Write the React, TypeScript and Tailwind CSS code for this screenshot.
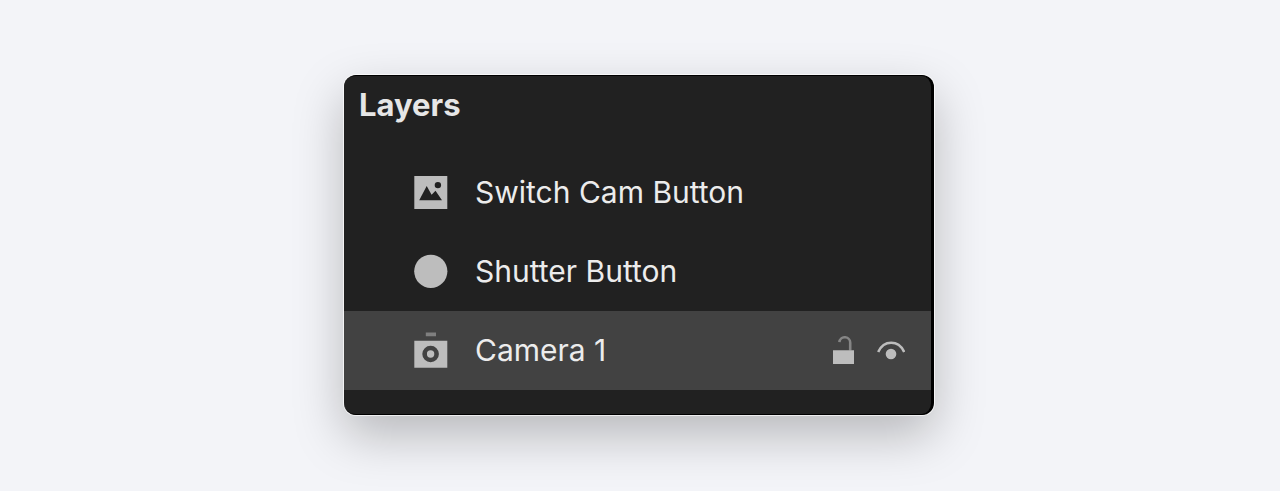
import React, { useState } from 'react';

interface Layer {
  id: string;
  name: string;
  icon: React.FC;
}

const ImageIcon: React.FC = () => (
  <svg width="34" height="34" viewBox="0 0 34 34" aria-hidden="true">
    <path d="M0.3 0.9h33v33h-33z" fill="#bdbdbd" />
    <path d="M5.2 25.3 12.7 10.9 17.6 19.7 21.5 15.7 28 25.3z" fill="#212121" />
    <circle cx="23.9" cy="10.1" r="3.2" fill="#212121" />
  </svg>
);

const CircleIcon: React.FC = () => (
  <svg width="34" height="34" viewBox="0 0 34 34" aria-hidden="true">
    <circle cx="16.8" cy="17.3" r="16.6" fill="#bdbdbd" />
  </svg>
);

const CameraIcon: React.FC = () => (
  <svg width="34" height="36" viewBox="0 0 34 36" aria-hidden="true">
    <path d="M11.8 0.6h10.2v3.6h-10.2z" fill="#7f7f7f" />
    <path d="M0.3 8.8h33v27h-33z" fill="#bdbdbd" />
    <circle cx="16.6" cy="22" r="6" fill="none" stroke="#424242" strokeWidth="4.6" />
  </svg>
);

const UnlockIcon: React.FC = () => (
  <svg width="22" height="28" viewBox="0 0 22 28" aria-hidden="true">
    <path d="M17.2 14.5V7.2a5.4 5.4 0 0 0-10.8-1" fill="none" stroke="#858585" strokeWidth="2.6" />
    <path d="M0 14.3h21v13.6h-21z" fill="#bdbdbd" />
  </svg>
);

const EyeIcon: React.FC = () => (
  <svg width="28" height="20" viewBox="0 0 28 20" aria-hidden="true">
    <path d="M1.2 12C3.8 6.4 8.4 2.8 14.2 2.8s10.4 3.6 13 9.2" fill="none" stroke="#bdbdbd" strokeWidth="2.6" />
    <circle cx="14" cy="14" r="5.3" fill="#bdbdbd" />
  </svg>
);

const layers: Layer[] = [
  { id: 'switch', name: 'Switch Cam Button', icon: ImageIcon },
  { id: 'shutter', name: 'Shutter Button', icon: CircleIcon },
  { id: 'camera', name: 'Camera 1', icon: CameraIcon },
];

const App: React.FC = () => {
  const [selected, setSelected] = useState('camera');

  return (
    <main className="flex min-h-screen items-center justify-center bg-[#f3f4f8] pr-0.5 pb-0.5 font-['Inter',sans-serif] [font-variant-ligatures:none]">
      <section className="w-full max-w-[590px] overflow-hidden rounded-xl border-y border-r-3 border-black bg-[#212121] pb-6 shadow-[0_0_0_1px_rgba(255,255,255,0.7),0_20px_50px_rgba(0,0,0,0.25)]">
        {/* Header */}
        <h1 className="px-[15px] pt-2 pb-7 text-[31px] leading-[41px] font-bold text-[#e6e6e6]">Layers</h1>

        {/* Layer rows */}
        <ul>
          {layers.map(({ id, name, icon: Icon }) => (
            <li
              key={id}
              className={`flex h-[79px] items-center pr-[26px] ${selected === id ? 'bg-[#424242]' : ''}`}
            >
              <button
                type="button"
                onClick={() => setSelected(id)}
                className="flex flex-1 items-center gap-[27px] pl-[70px] text-left text-[30px] leading-10 text-[#ececec]"
              >
                <Icon />
                {name}
              </button>
              {selected === id && (
                <div className="flex items-center gap-[22px]">
                  <button type="button" aria-label="Lock layer">
                    <UnlockIcon />
                  </button>
                  <button type="button" aria-label="Toggle visibility">
                    <EyeIcon />
                  </button>
                </div>
              )}
            </li>
          ))}
        </ul>
      </section>
    </main>
  );
};

export default App;
